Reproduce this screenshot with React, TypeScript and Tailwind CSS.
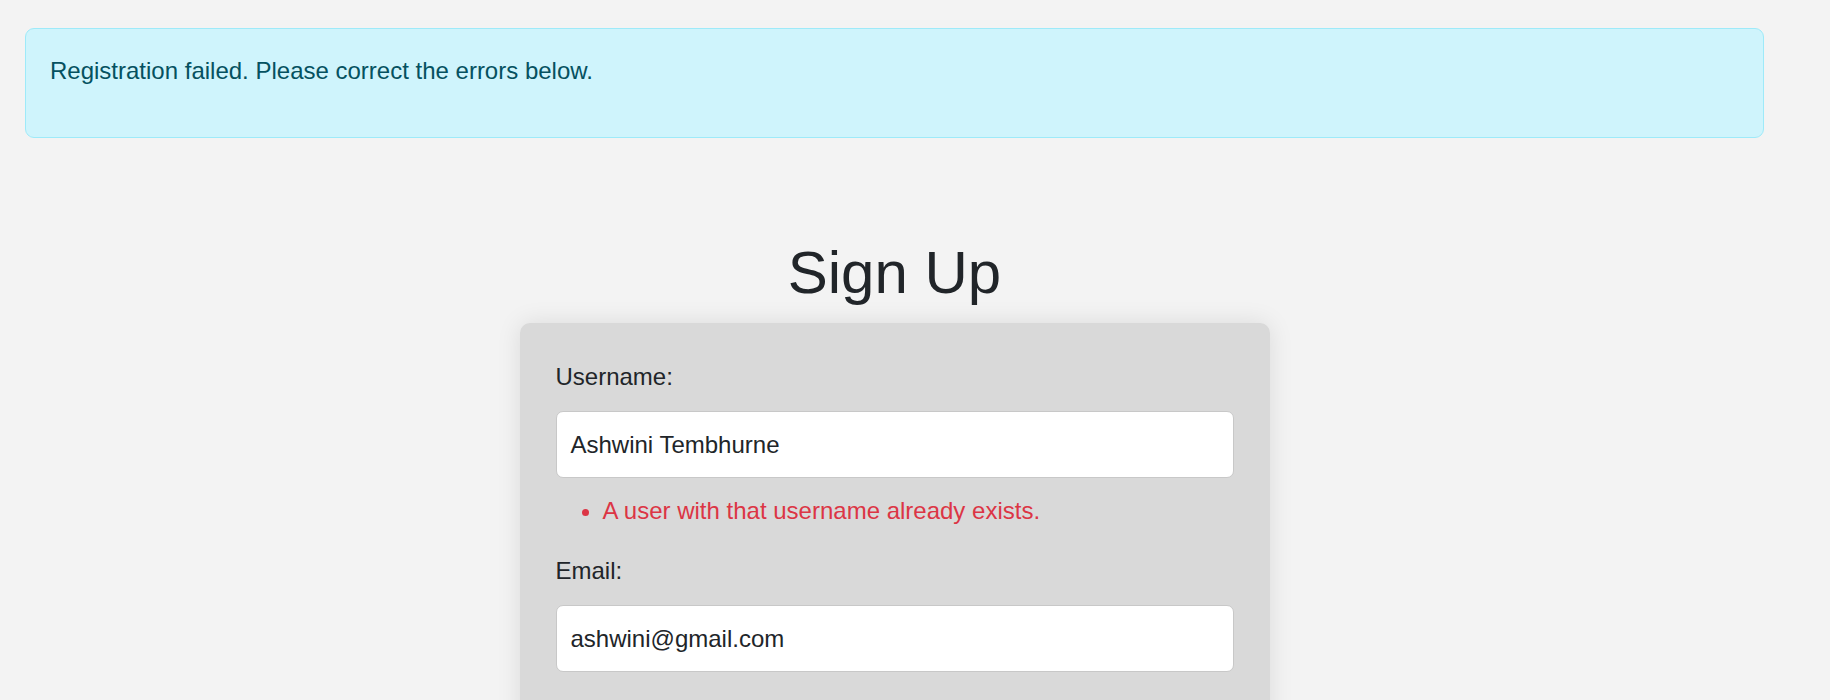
export default function App() {
  return (
    <div className="min-h-[700px] bg-[#f3f3f3] font-['Liberation_Sans',Arial,sans-serif] text-[#212529]">
      <div className="w-[1789px] px-[25px] pt-[28px]">
        <div className="rounded-[9px] border-[1.5px] border-[#9eeaf9] bg-[#cff4fc] px-[24px] pt-[23.5px] pb-[48.5px] text-[24px] leading-[36px] text-[#055160]">
          Registration failed. Please correct the errors below.
        </div>

        <h1 className="mt-[99px] text-center text-[60px] leading-[72px] font-normal text-[#212529]">
          Sign Up
        </h1>

        <div className="mx-auto mt-[14px] w-[750px] rounded-[10px] bg-[#d9d9d9] px-[36px] pt-[35.5px] pb-[40px] shadow-[0_0_25px_rgba(0,0,0,0.1)]">
          <label className="block text-[24px] leading-[36px]">Username:</label>
          <div className="mt-[16.5px] flex h-[67px] items-center rounded-[7px] border border-[#c8c8c8] bg-white px-[14px] text-[24px]">
            Ashwini Tembhurne
          </div>
          <ul className="mt-[15px] list-disc pl-[47px] text-[24px] leading-[36px] text-[#dc3545]">
            <li>A user with that username already exists.</li>
          </ul>

          <label className="mt-[24px] block text-[24px] leading-[36px]">Email:</label>
          <div className="mt-[16px] flex h-[67px] items-center rounded-[7px] border border-[#c8c8c8] bg-white px-[14px] text-[24px]">
            ashwini@gmail.com
          </div>
          <div className="h-[60px]" />
        </div>
      </div>
    </div>
  )
}
